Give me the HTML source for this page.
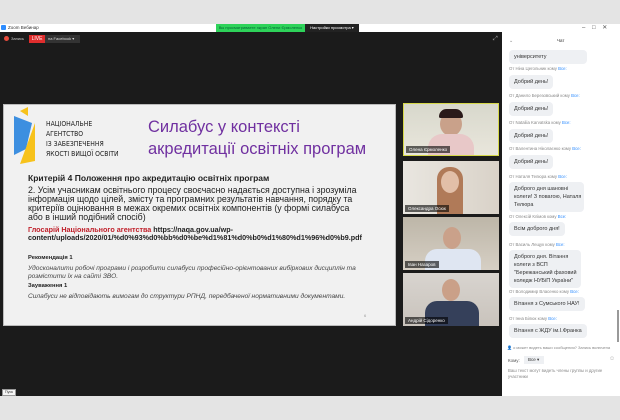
<!DOCTYPE html>
<html><head><meta charset="utf-8"><style>
*{margin:0;padding:0;box-sizing:border-box}
body{width:620px;height:420px;position:relative;overflow:hidden;background:#e4e4e4;font-family:"Liberation Sans","DejaVu Sans",sans-serif}
.a{position:absolute;white-space:nowrap}
.dark{position:absolute;left:0;top:32px;width:502px;height:364px;background:#1b1b1b}
.chat{position:absolute;left:502px;top:32px;width:118px;height:364px;background:#fff}
.slide{position:absolute;left:3px;top:104px;width:393px;height:222px;background:#f1f1f1;border:1px solid #bbb}
.p{font-size:8.8px;color:#222;line-height:9px}
.lbl{font-size:4.3px;color:#888}
.lbl b{color:#2d8cff;font-weight:normal}
.bub{position:absolute;left:509px;background:#eef0f3;border-radius:4px;font-size:5.5px;color:#333;padding:3px 5px;line-height:8px;white-space:nowrap}
.th{position:absolute;left:403px;width:96px;height:53px;overflow:hidden}
.nm{position:absolute;left:2px;bottom:2px;background:rgba(0,0,0,.6);color:#fff;font-size:4.5px;padding:1px 3px}
</style></head><body>
<div class="a" style="left:0;top:24px;width:620px;height:8px;background:#fff"></div>
<div class="a" style="left:1px;top:25px;width:5px;height:5px;background:#2d8cff;border-radius:1px"></div>
<div class="a" style="left:8px;top:24.5px;font-size:4.5px;color:#333">Zoom Вебинар</div>
<div class="a" style="left:216px;top:24px;width:89px;height:8px;background:#2ed35a;font-size:4px;color:#063;text-align:center;line-height:8px">Вы просматриваете экран Олени Єрмоленко</div>
<div class="a" style="left:305px;top:24px;width:54px;height:8px;background:#222;font-size:4px;color:#fff;text-align:center;line-height:8px">Настройки просмотра ▾</div>
<div class="a" style="left:582px;top:24px;font-size:6px;color:#555">–&nbsp;&nbsp;&nbsp;&nbsp;□&nbsp;&nbsp;&nbsp;&nbsp;✕</div>
<div class="dark"></div>
<div class="a" style="left:4px;top:36px;width:5px;height:5px;border-radius:50%;background:#e84c3d"></div>
<div class="a" style="left:11px;top:36px;font-size:4px;color:#ccc">Запись</div>
<div class="a" style="left:29px;top:35px;width:16px;height:8px;background:#e02d2d;color:#fff;font-size:5px;text-align:center;line-height:8px">LIVE</div>
<div class="a" style="left:45px;top:35px;width:35px;height:8px;background:#333;color:#ddd;font-size:4px;line-height:8px;padding-left:3px">на Facebook ▾</div>
<div class="a" style="left:493px;top:36px;font-size:6px;color:#aaa">⤢</div>
<div class="slide">
<svg class="a" style="left:8px;top:2px" width="26" height="58" viewBox="0 0 26 58"><polygon points="8,4 16,0 16,9" fill="#f7c21b"/><polygon points="2,9 20,16 14,42 2,48" fill="#3d8fe0"/><polygon points="8,57 23,16 23,54" fill="#f7c21b"/></svg>
<div class="a" style="left:42px;top:14px;font-size:6.8px;line-height:10px;color:#222;font-family:'DejaVu Sans Condensed','Liberation Sans',sans-serif">НАЦІОНАЛЬНЕ<br>АГЕНТСТВО<br>ІЗ ЗАБЕЗПЕЧЕННЯ<br>ЯКОСТІ ВИЩОЇ ОСВІТИ</div>
<div class="a" style="left:144px;top:11px;font-size:16.5px;line-height:22px;color:#7030a0">Силабус у контексті<br>акредитації освітніх програм</div>
<div class="a p" style="left:24px;top:69px;font-weight:bold;font-size:8.5px">Критерій 4 Положення про акредитацію освітніх програм</div>
<div class="a p" style="left:24px;top:81px">2. Усім учасникам освітнього процесу своєчасно надається доступна і зрозуміла<br>інформація щодо цілей, змісту та програмних результатів навчання, порядку та<br>критеріїв оцінювання в межах окремих освітніх компонентів (у формі силабуса<br>або в інший подібний спосіб)</div>
<div class="a p" style="left:24px;top:121px;font-weight:bold;font-size:7.2px;line-height:8px"><span style="color:#c0202a">Глосарій Національного агентства</span> https://naqa.gov.ua/wp-<br>content/uploads/2020/01/%d0%93%d0%bb%d0%be%d1%81%d0%b0%d1%80%d1%96%d0%b9.pdf</div>
<div class="a" style="left:24px;top:150px;font-size:5.8px;font-weight:bold;color:#222">Рекомендація 1</div>
<div class="a" style="left:24px;top:160px;font-size:6.6px;font-style:italic;color:#444;line-height:8px">Удосконалити робочі програми і розробити силабуси професійно-орієнтованих вибіркових дисциплін та<br>розмістити їх на сайті ЗВО.</div>
<div class="a" style="left:24px;top:178px;font-size:5.8px;font-weight:bold;color:#222">Зауваження 1</div>
<div class="a" style="left:24px;top:188px;font-size:6.6px;font-style:italic;color:#444">Силабуси не відповідають вимогам до структури РПНД, передбаченої нормативними документами.</div>
<div class="a" style="left:360px;top:208px;font-size:4px;color:#999">6</div>
</div>
<div class="th" style="top:103px;background:linear-gradient(#d8d8cc,#e9e6dc);border:1.5px solid #d6d84a">
<div class="a" style="left:36px;top:8px;width:22px;height:24px;border-radius:50%;background:#c9a18a"></div>
<div class="a" style="left:35px;top:5px;width:24px;height:9px;border-radius:10px 10px 2px 2px;background:#2a1a1a"></div>
<div class="a" style="left:24px;top:30px;width:46px;height:22px;border-radius:14px 14px 0 0;background:#e8c8c8"></div>
<div class="nm">Олена Єрмоленко</div></div>
<div class="th" style="top:161px;background:linear-gradient(90deg,#e9e6e0,#d9d2c8)">
<div class="a" style="left:34px;top:6px;width:26px;height:48px;border-radius:12px 12px 0 0;background:#b07a58"></div>
<div class="a" style="left:38px;top:10px;width:18px;height:22px;border-radius:50%;background:#e2bfa8"></div>
<div class="nm">Олександра Осюк</div></div>
<div class="th" style="top:217px;background:linear-gradient(#bdb6a8,#d6cfc4)">
<div class="a" style="left:40px;top:10px;width:18px;height:22px;border-radius:50%;background:#caa18a"></div>
<div class="a" style="left:22px;top:32px;width:56px;height:22px;border-radius:12px 12px 0 0;background:#dfe6f2"></div>
<div class="nm">Іван Назаров</div></div>
<div class="th" style="top:273px;background:linear-gradient(#d8d4cf,#c9c3bc)">
<div class="a" style="left:39px;top:6px;width:18px;height:22px;border-radius:50%;background:#caa088"></div>
<div class="a" style="left:22px;top:28px;width:54px;height:26px;border-radius:12px 12px 0 0;background:#35405a"></div>
<div class="nm">Андрій Сідоренко</div></div>
<div class="chat"></div>
<div class="a" style="left:509px;top:38px;font-size:5px;color:#888">⌄</div>
<div class="a" style="left:557px;top:38px;font-size:4.5px;color:#333">Чат</div>
<div class="bub" style="top:50px;width:78px">університету</div>
<div class="a lbl" style="left:509px;top:66px">От Ніна Цегольник кому <b>Все:</b></div>
<div class="bub" style="top:75px">Добрий день!</div>
<div class="a lbl" style="left:509px;top:93px">От Данило Березовський кому <b>Все:</b></div>
<div class="bub" style="top:102px">Добрий день!</div>
<div class="a lbl" style="left:509px;top:120px">От Nataliia Karvatska кому <b>Все:</b></div>
<div class="bub" style="top:129px">Добрий день!</div>
<div class="a lbl" style="left:509px;top:146px">От Валентина Ніколаєнко кому <b>Все:</b></div>
<div class="bub" style="top:155px">Добрий день!</div>
<div class="a lbl" style="left:509px;top:174px">От Наталя Телюра кому <b>Все:</b></div>
<div class="bub" style="top:182px;width:75px">Доброго дня шановні<br>колеги! З повагою, Наталя<br>Телюра</div>
<div class="a lbl" style="left:509px;top:214px">От Олексій Клімов кому <b>Все:</b></div>
<div class="bub" style="top:222px">Всім доброго дня!</div>
<div class="a lbl" style="left:509px;top:242px">От Василь Лещук кому <b>Все:</b></div>
<div class="bub" style="top:250px;width:72px">Доброго дня. Вітання<br>колеги з ВСП<br>"Бережанський фаховий<br>коледж НУБіП України"</div>
<div class="a lbl" style="left:509px;top:289px">От Володимир Власенко кому <b>Все:</b></div>
<div class="bub" style="top:297px">Вітання з Сумського НАУ!</div>
<div class="a lbl" style="left:509px;top:316px">От Інна Білюк кому <b>Все:</b></div>
<div class="bub" style="top:324px">Вітання с ЖДУ ім.І.Франка</div>
<div class="a" style="left:617px;top:310px;width:2px;height:32px;background:#999"></div>
<div class="a lbl" style="left:507px;top:345px;font-size:4px">👤 о может видеть ваши сообщения? Запись включена</div>
<div class="a" style="left:508px;top:358px;font-size:4.5px;color:#555">Кому:</div>
<div class="a" style="left:524px;top:356px;width:20px;height:8px;background:#eef0f3;font-size:4.5px;color:#333;line-height:8px;padding-left:4px">Все ▾</div>
<div class="a" style="left:609px;top:356px;font-size:6px;color:#aaa">☺</div>
<div class="a" style="left:508px;top:368px;font-size:4.3px;color:#888;line-height:6px">Ваш текст могут видеть члены группы и другие<br>участники</div>
<div class="a" style="left:2px;top:389px;width:14px;height:7px;background:#f4f4f4;border:1px solid #999;font-size:3.8px;color:#333;text-align:center;line-height:5px">Пуск</div>
</body></html>
